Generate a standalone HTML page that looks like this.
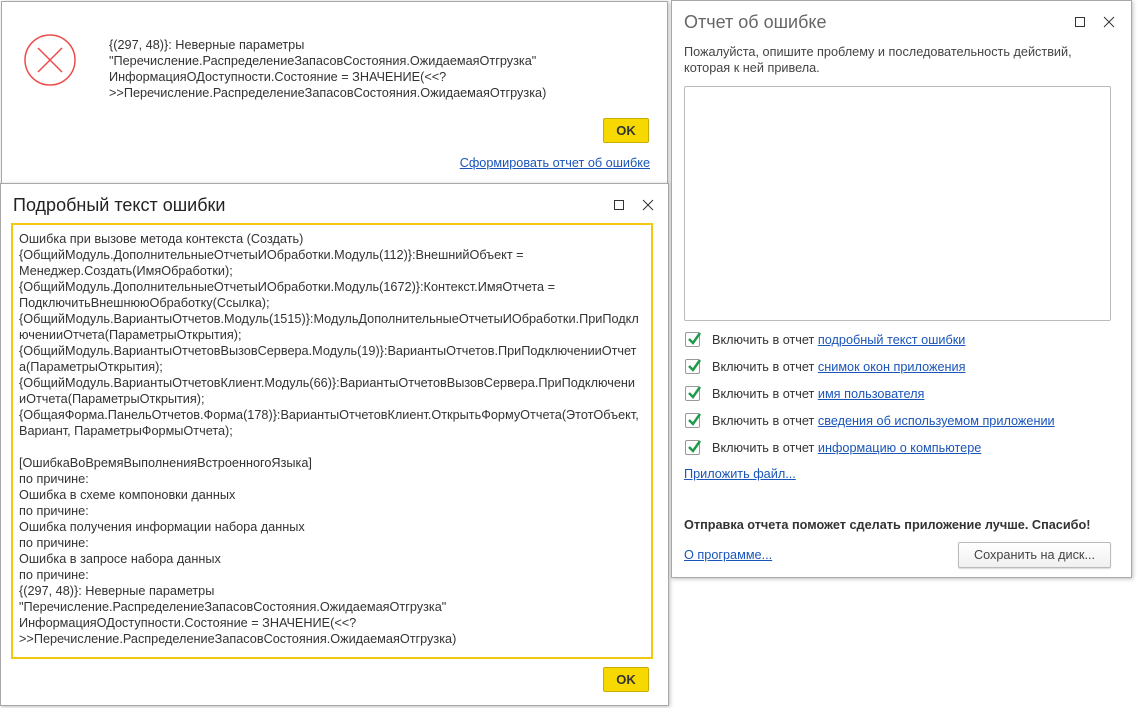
<!DOCTYPE html>
<html><head><meta charset="utf-8"><style>
*{margin:0;padding:0;box-sizing:border-box}
body{width:1147px;height:708px;background:#fff;position:relative;overflow:hidden;font-family:"Liberation Sans",Arial,sans-serif;font-size:12.7px;color:#333}
.win{position:absolute;background:#fff;border:1px solid #a8a8a8;box-shadow:1px 1px 4px rgba(0,0,0,.25)}
.line{position:absolute;white-space:nowrap;line-height:16px}
.lk{color:#1a55b9;text-decoration:underline}
.ok{position:absolute;width:46px;height:25px;background:#f7d900;border:1px solid #c9ac00;border-radius:2px;font-weight:bold;font-size:13px;text-align:center;line-height:23px;color:#333}
.title{position:absolute;font-size:18px;white-space:nowrap}
.ctl{position:absolute}
.cb{position:absolute;width:15px;height:15px;border:1px solid #999;border-radius:2px;background:#fff}
.cb svg{position:absolute;left:1px;top:-2px}
</style></head><body>

<div class="win" style="left:1px;top:1px;width:667px;height:184px">
 <svg style="position:absolute;left:21px;top:31px" width="54" height="54"><circle cx="27" cy="27" r="25" fill="none" stroke="#ef4b4b" stroke-width="1.5"/><path d="M15 15L39 39M39 15L15 39" stroke="#ef4b4b" stroke-width="1.5"/></svg>
 <div class="line" style="left:107px;top:35px">{(297, 48)}: Неверные параметры<br>"Перечисление.РаспределениеЗапасовСостояния.ОжидаемаяОтгрузка"<br>ИнформацияОДоступности.Состояние = ЗНАЧЕНИЕ(&lt;&lt;?<br>&gt;&gt;Перечисление.РаспределениеЗапасовСостояния.ОжидаемаяОтгрузка)</div>
 <div class="ok" style="left:601px;top:116px">OK</div>
 <div class="line lk" style="right:17px;top:153px">Сформировать отчет об ошибке</div>
</div>

<div class="win" style="left:0;top:183px;width:669px;height:523px">
 <div class="title" style="left:12px;top:11px;color:#222">Подробный текст ошибки</div>
 <svg class="ctl" style="left:612px;top:15px" width="12" height="12"><rect x="1.5" y="1.5" width="9" height="9" fill="none" stroke="#333"/></svg>
 <svg class="ctl" style="left:641px;top:15px" width="12" height="12"><path d="M1 1L11 11M11 1L1 11" stroke="#333"/></svg>
 <div style="position:absolute;left:10px;top:39px;width:642px;height:436px;border:2px solid #f2c811"></div>
 <div class="line" style="left:18px;top:47px">Ошибка при вызове метода контекста (Создать)<br>{ОбщийМодуль.ДополнительныеОтчетыИОбработки.Модуль(112)}:ВнешнийОбъект =<br>Менеджер.Создать(ИмяОбработки);<br>{ОбщийМодуль.ДополнительныеОтчетыИОбработки.Модуль(1672)}:Контекст.ИмяОтчета =<br>ПодключитьВнешнююОбработку(Ссылка);<br>{ОбщийМодуль.ВариантыОтчетов.Модуль(1515)}:МодульДополнительныеОтчетыИОбработки.ПриПодкл<br>юченииОтчета(ПараметрыОткрытия);<br>{ОбщийМодуль.ВариантыОтчетовВызовСервера.Модуль(19)}:ВариантыОтчетов.ПриПодключенииОтчет<br>а(ПараметрыОткрытия);<br>{ОбщийМодуль.ВариантыОтчетовКлиент.Модуль(66)}:ВариантыОтчетовВызовСервера.ПриПодключени<br>иОтчета(ПараметрыОткрытия);<br>{ОбщаяФорма.ПанельОтчетов.Форма(178)}:ВариантыОтчетовКлиент.ОткрытьФормуОтчета(ЭтотОбъект,<br>Вариант, ПараметрыФормыОтчета);<br><br>[ОшибкаВоВремяВыполненияВстроенногоЯзыка]<br>по причине:<br>Ошибка в схеме компоновки данных<br>по причине:<br>Ошибка получения информации набора данных<br>по причине:<br>Ошибка в запросе набора данных<br>по причине:<br>{(297, 48)}: Неверные параметры<br>"Перечисление.РаспределениеЗапасовСостояния.ОжидаемаяОтгрузка"<br>ИнформацияОДоступности.Состояние = ЗНАЧЕНИЕ(&lt;&lt;?<br>&gt;&gt;Перечисление.РаспределениеЗапасовСостояния.ОжидаемаяОтгрузка)</div>
 <div class="ok" style="left:602px;top:483px">OK</div>
</div>

<div class="win" style="left:671px;top:0;width:461px;height:578px">
 <div class="title" style="left:12px;top:11px;color:#666">Отчет об ошибке</div>
 <svg class="ctl" style="left:402px;top:15px" width="12" height="12"><rect x="1.5" y="1.5" width="9" height="9" fill="none" stroke="#333"/></svg>
 <svg class="ctl" style="left:431px;top:15px" width="12" height="12"><path d="M1 1L11 11M11 1L1 11" stroke="#333"/></svg>
 <div class="line" style="left:12px;top:43px;color:#444">Пожалуйста, опишите проблему и последовательность действий,<br>которая к ней привела.</div>
 <div style="position:absolute;left:12px;top:85px;width:427px;height:235px;border:1px solid #bbb;border-radius:2px"></div>
 <div class="cb" style="left:13px;top:331px"><svg width="16" height="16"><path d="M2 8L6 12L13 2" fill="none" stroke="#1d9a4a" stroke-width="2.5"/></svg></div>
 <div class="line" style="left:40px;top:331px">Включить в отчет <span class="lk">подробный текст ошибки</span></div>
 <div class="cb" style="left:13px;top:358px"><svg width="16" height="16"><path d="M2 8L6 12L13 2" fill="none" stroke="#1d9a4a" stroke-width="2.5"/></svg></div>
 <div class="line" style="left:40px;top:358px">Включить в отчет <span class="lk">снимок окон приложения</span></div>
 <div class="cb" style="left:13px;top:385px"><svg width="16" height="16"><path d="M2 8L6 12L13 2" fill="none" stroke="#1d9a4a" stroke-width="2.5"/></svg></div>
 <div class="line" style="left:40px;top:385px">Включить в отчет <span class="lk">имя пользователя</span></div>
 <div class="cb" style="left:13px;top:412px"><svg width="16" height="16"><path d="M2 8L6 12L13 2" fill="none" stroke="#1d9a4a" stroke-width="2.5"/></svg></div>
 <div class="line" style="left:40px;top:412px">Включить в отчет <span class="lk">сведения об используемом приложении</span></div>
 <div class="cb" style="left:13px;top:439px"><svg width="16" height="16"><path d="M2 8L6 12L13 2" fill="none" stroke="#1d9a4a" stroke-width="2.5"/></svg></div>
 <div class="line" style="left:40px;top:439px">Включить в отчет <span class="lk">информацию о компьютере</span></div>
 <div class="line lk" style="left:12px;top:465px">Приложить файл...</div>
 <div class="line" style="left:12px;top:516px;font-weight:bold;color:#333">Отправка отчета поможет сделать приложение лучше. Спасибо!</div>
 <div class="line lk" style="left:12px;top:546px">О программе...</div>
 <div style="position:absolute;left:286px;top:541px;width:153px;height:26px;border:1px solid #bbb;border-radius:2px;background:linear-gradient(#fff,#f0f0f0);text-align:center;line-height:24px;color:#444;box-shadow:0 1px 1px rgba(0,0,0,.15)">Сохранить на диск...</div>
</div>
</body></html>
